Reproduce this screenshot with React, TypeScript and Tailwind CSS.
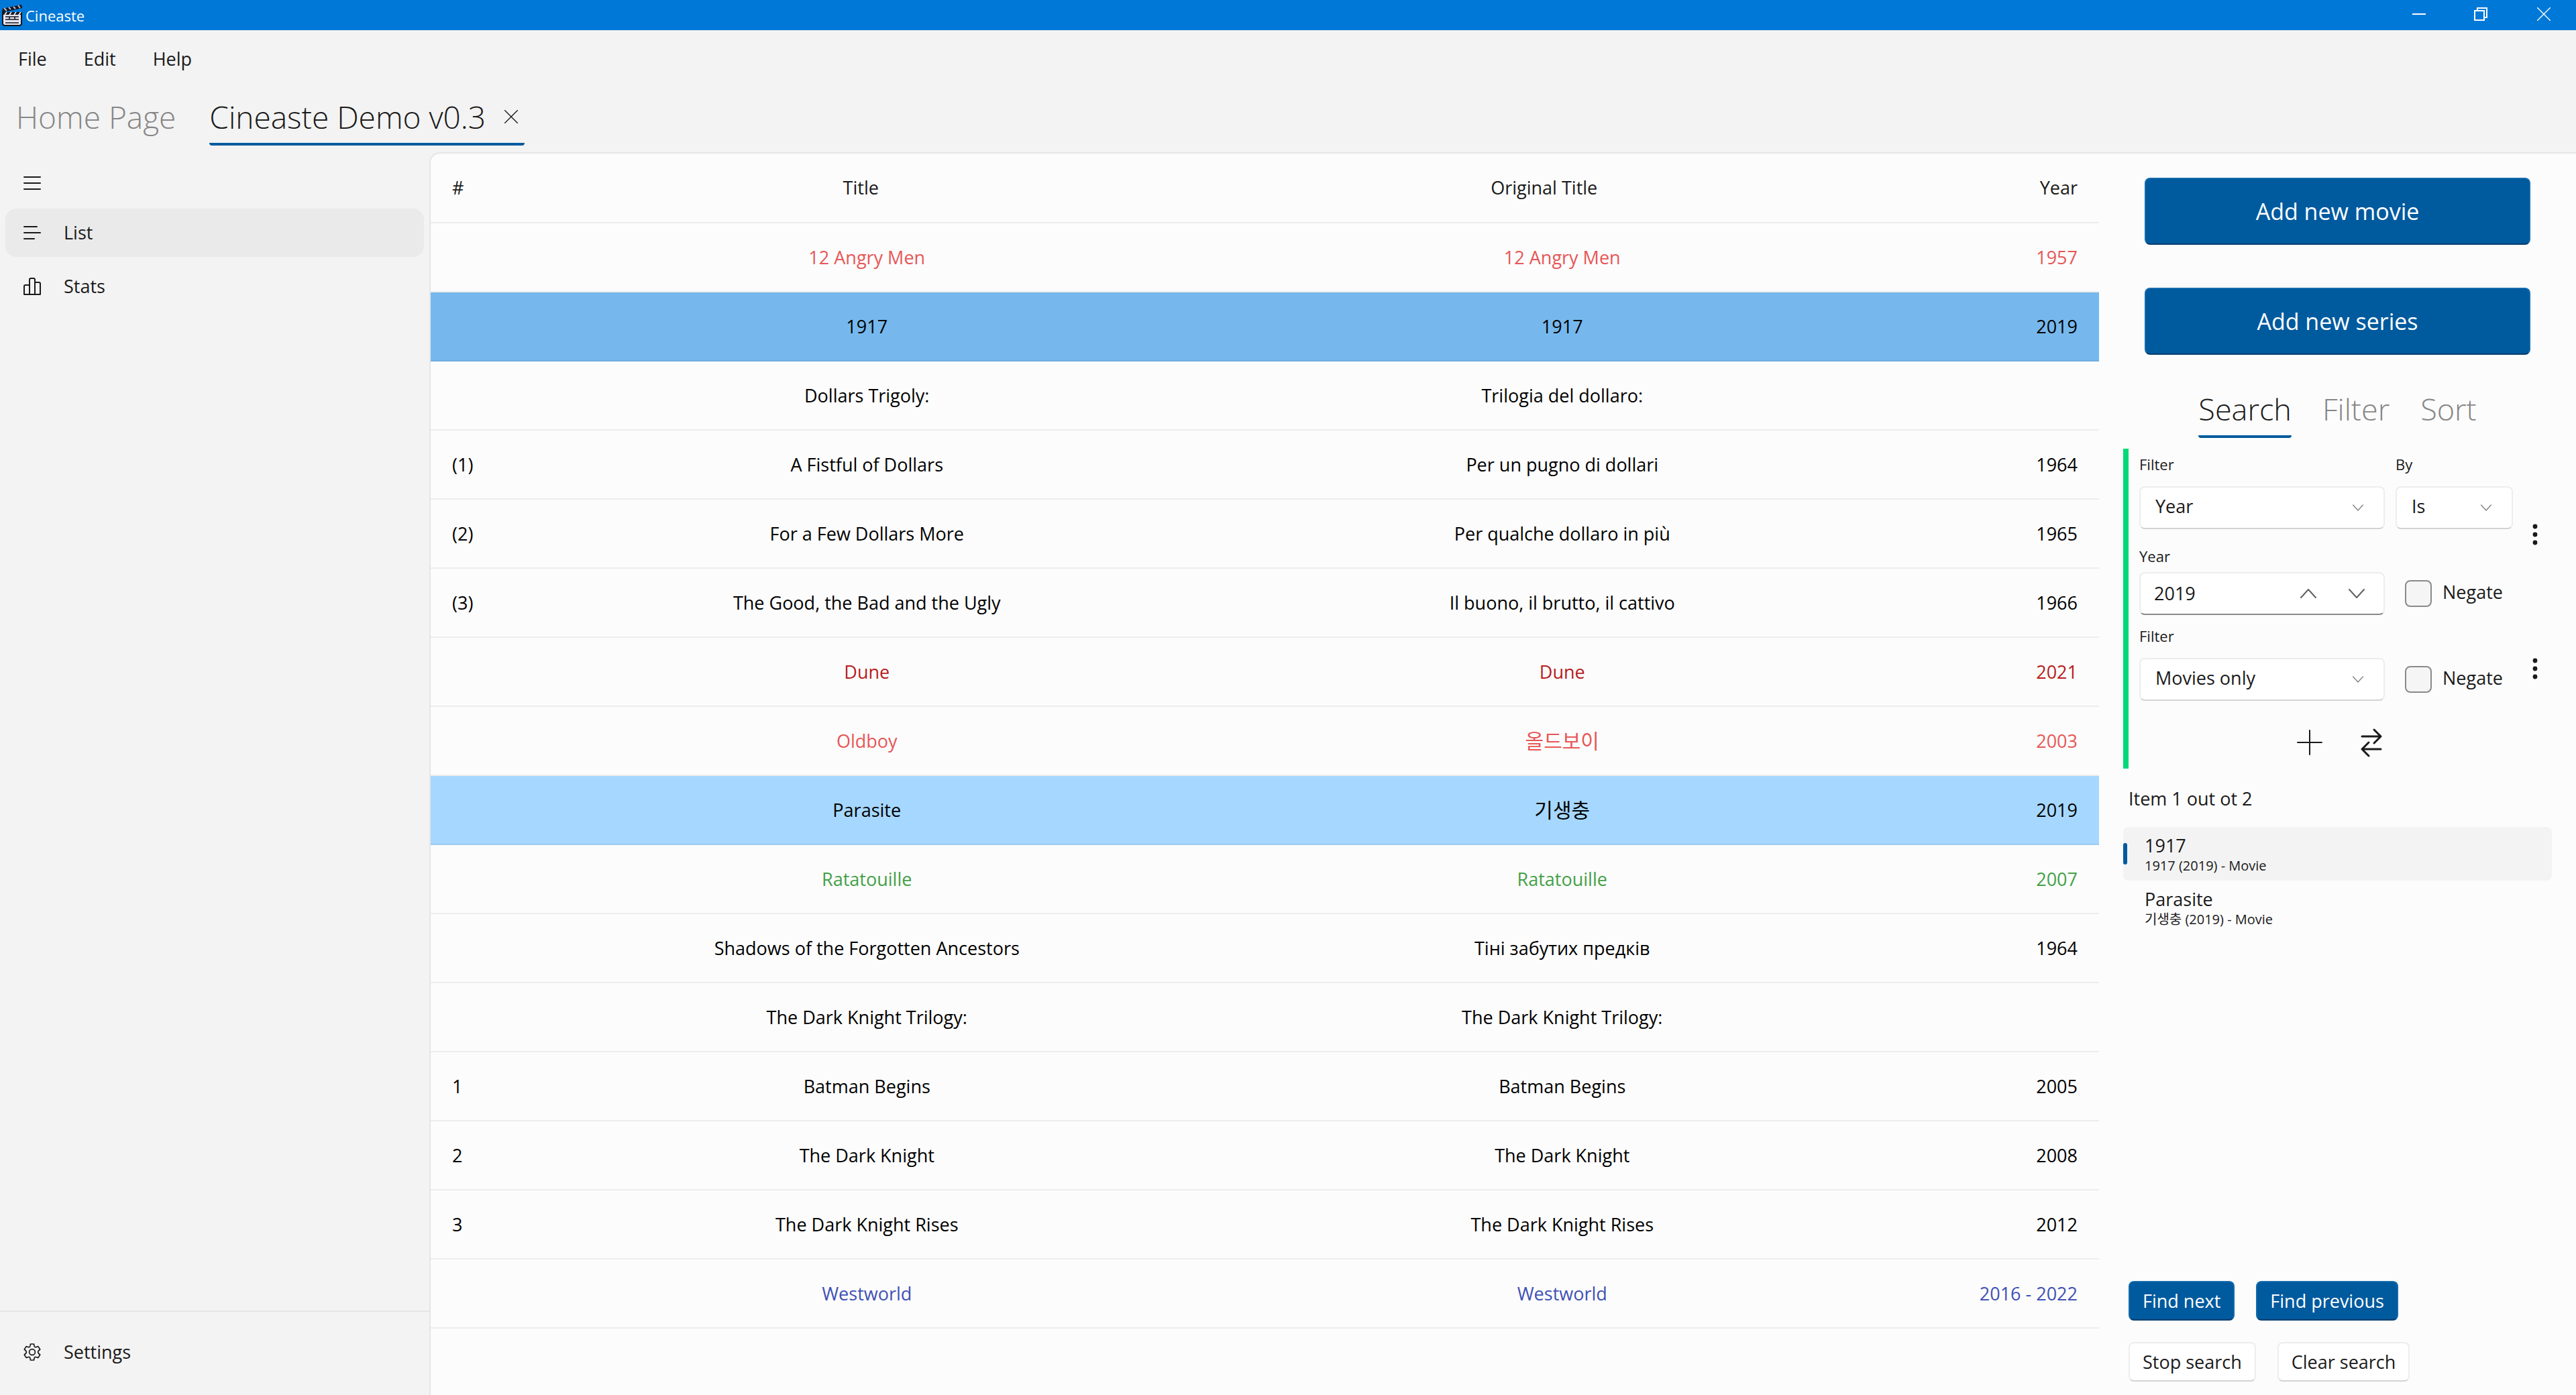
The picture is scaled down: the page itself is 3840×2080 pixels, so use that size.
import React from "react";

type Row = { n?: string; title: string; original?: string; year?: string; color?: string; bg?: string; korean?: boolean };

const rows: Row[] = [
  { title: "12 Angry Men", year: "1957", color: "text-[#e75757]" },
  { title: "1917", year: "2019", bg: "bg-[#76b8ed] border-[#6fade0]" },
  { title: "Dollars Trigoly:", original: "Trilogia del dollaro:" },
  { n: "(1)", title: "A Fistful of Dollars", original: "Per un pugno di dollari", year: "1964" },
  { n: "(2)", title: "For a Few Dollars More", original: "Per qualche dollaro in più", year: "1965" },
  { n: "(3)", title: "The Good, the Bad and the Ugly", original: "Il buono, il brutto, il cattivo", year: "1966" },
  { title: "Dune", year: "2021", color: "text-[#b71c1c]" },
  { title: "Oldboy", original: "올드보이", year: "2003", color: "text-[#e75757]", korean: true },
  { title: "Parasite", original: "기생충", year: "2019", bg: "bg-[#a6d8ff] border-[#9ccbf1]", korean: true },
  { title: "Ratatouille", year: "2007", color: "text-[#43a047]" },
  { title: "Shadows of the Forgotten Ancestors", original: "Тіні забутих предків", year: "1964" },
  { title: "The Dark Knight Trilogy:" },
  { n: "1", title: "Batman Begins", year: "2005" },
  { n: "2", title: "The Dark Knight", year: "2008" },
  { n: "3", title: "The Dark Knight Rises", year: "2012" },
  { title: "Westworld", year: "2016 - 2022", color: "text-[#3f51b5]" },
];

const stroke = { fill: "none", stroke: "currentColor", strokeWidth: 2, strokeLinecap: "round" as const, strokeLinejoin: "round" as const };

function Clapper() {
  return (
    <svg width="32" height="32" viewBox="0 0 32 32" aria-hidden="true">
      <path d="M2 12h28v17l-2 2H4l-2-2z" fill="#e6e7f2" stroke="#16161d" strokeWidth="2" />
      <path d="M1 8l4 3h26v4H1z" fill="#16161d" />
      <path d="M5 15l3-4M12 15l3-4M19 15l3-4M26 15l3-4" stroke="#e6e7f2" strokeWidth="2" />
      <path d="M1 6L30 0l1 5L4 11z" fill="#16161d" />
      <path d="M4 5l4 4M11 4l3 3M18 3l3 3M25 1l3 4" stroke="#b9bbdf" strokeWidth="2" />
      <path d="M6 18h20M6 22h20M6 27h20M12 18v4M20 18v4" stroke="#16161d" strokeWidth="1.6" />
    </svg>
  );
}

function Cross({ size }: { size: number }) {
  return (
    <svg width={size} height={size} viewBox="0 0 20 20" {...stroke} strokeWidth={1.4} aria-hidden="true">
      <path d="M.5.5l19 19M19.5.5l-19 19" />
    </svg>
  );
}

function Chevron({ up, className }: { up?: boolean; className: string }) {
  return (
    <svg className={className} viewBox="0 0 24 14" {...stroke} aria-hidden="true">
      <path d={up ? "M1 13L12 1l11 12" : "M1 1l11 12L23 1"} />
    </svg>
  );
}

function Dots({ className }: { className?: string }) {
  return (
    <button aria-label="More options" className={`mr-[5px] flex h-10 w-10 items-center justify-center ${className ?? ""}`}>
      <svg width="8" height="32" viewBox="0 0 8 32" fill="#1a1a1a" aria-hidden="true">
        <circle cx="4" cy="4" r="3.4" />
        <circle cx="4" cy="16" r="3.4" />
        <circle cx="4" cy="28" r="3.4" />
      </svg>
    </button>
  );
}

function Dropdown({ id, label, value, className }: { id: string; label: string; value: string; className: string }) {
  return (
    <div className={className}>
      <label htmlFor={id} className="block h-[49px] text-[22px] leading-8">{label}</label>
      <div className="relative">
        <select
          id={id}
          defaultValue={value}
          className="h-16 w-full appearance-none rounded-lg border-2 border-[#ededed] border-b-[#d3d3d3] bg-white pb-1 pl-[22px]"
        >
          <option>{value}</option>
        </select>
        <Chevron className="pointer-events-none absolute top-[27px] right-8 h-[10px] w-4 text-[#808080]" />
      </div>
    </div>
  );
}

function Negate() {
  return (
    <label className="flex h-16 items-center gap-4">
      <input type="checkbox" className="size-10 appearance-none rounded-lg border-2 border-[#8a8a8a] bg-[#f5f5f5]" />
      <span className="pb-1">Negate</span>
    </label>
  );
}

const accent = "rounded-lg border-2 border-[#146aab] border-b-[#003d70] bg-[#005a9e] text-white";
const plain = "rounded-lg border-2 border-[#ededed] border-b-[#d3d3d3] bg-white";

export default function App() {
  return (
    <div className="flex min-h-screen flex-col bg-[#f3f3f3] font-['Open_Sans','Noto_Sans_CJK_KR',sans-serif] text-[27px] leading-9 text-[#1a1a1a]">
      <header className="flex h-[45px] items-center bg-[#0078d7] text-white">
        <div className="flex flex-1 items-center gap-1 pl-0.5">
          <Clapper />
          <h1 className="text-[22px] leading-7">Cineaste</h1>
        </div>
        <button aria-label="Minimize" className="flex h-full w-[92px] items-center justify-center pb-1">
          <svg width="20" height="20" viewBox="0 0 20 20" aria-hidden="true"><path d="M0 10h20" stroke="white" strokeWidth="2" /></svg>
        </button>
        <button aria-label="Restore" className="flex h-full w-[92px] items-center justify-center pb-1">
          <svg width="20" height="20" viewBox="0 0 20 20" fill="none" stroke="white" strokeWidth="2" aria-hidden="true">
            <path d="M1 5h14v14H1zM5 5V1h14v14h-4" />
          </svg>
        </button>
        <button aria-label="Close" className="flex h-full w-[96px] items-center justify-center pb-1"><Cross size={20} /></button>
      </header>

      <nav className="flex h-[86px] items-center gap-[55px] pl-[27px]" aria-label="Menu">
        <button>File</button>
        <button>Edit</button>
        <button>Help</button>
      </nav>

      <div className="flex h-24 items-start gap-[50px] pt-1 pl-6 text-[46px] leading-[78px] font-light" role="tablist">
        <button role="tab" aria-selected="false" className="text-[#868686]">Home Page</button>
        <div className="flex items-center gap-7 rounded-sm border-b-4 border-[#005a9e] pr-2.5">
          <button role="tab" aria-selected="true">Cineaste Demo v0.3</button>
          <button aria-label="Close tab" className="flex"><Cross size={20} /></button>
        </div>
      </div>

      <div className="flex flex-1">
        <aside className="flex w-[640px] shrink-0 flex-col">
          <button aria-label="Toggle navigation" className="flex h-[84px] items-center pt-2 pl-[35px]">
            <svg width="26" height="26" viewBox="0 0 26 26" {...stroke} aria-hidden="true"><path d="M1 4h24M1 13h24M1 22h24" /></svg>
          </button>
          <nav className="flex flex-1 flex-col gap-2 px-2" aria-label="Views">
            <button className="flex h-[72px] items-center gap-[34px] rounded-2xl bg-[#eaeaea] pl-[27px]">
              <svg width="26" height="26" viewBox="0 0 26 26" {...stroke} aria-hidden="true"><path d="M1 4h19M1 13h24M1 22h15" /></svg>
              List
            </button>
            <button className="flex h-[72px] items-center gap-[34px] pl-[27px]">
              <svg width="26" height="26" viewBox="0 0 26 26" {...stroke} aria-hidden="true">
                <path d="M9 25V3a2 2 0 0 1 2-2h4a2 2 0 0 1 2 2v22M9 11H3a2 2 0 0 0-2 2v12h24V9a2 2 0 0 0-2-2h-6" />
              </svg>
              Stats
            </button>
          </nav>
          <div className="h-[126px] border-t-2 border-[#e5e5e5] px-2 pt-6">
            <button className="flex h-[72px] items-center gap-[34px] pl-[27px]">
              <svg width="26" height="26" viewBox="0 0 26 26" {...stroke} strokeWidth={1.7} aria-hidden="true">
                <circle cx="13" cy="13" r="4.4" />
                <path d="M10.5 1h5l.6 3Q16.800 6.300 19 5.500l2.900-.9L24.700 9l-2.200 2Q20.800 13 22.500 15l2.200 2-2.800 4.400-2.900-.9Q16.800 19.700 16.100 22l-.6 3h-5l-.6-3Q9.200 19.700 7 20.500l-2.900.9L1.300 17l2.200-2Q5.200 13 3.500 11L1.300 9l2.800-4.400 2.900.9Q9.200 6.300 9.900 4z" />
              </svg>
              Settings
            </button>
          </div>
        </aside>

        <main className="flex flex-1 rounded-tl-2xl border-t-2 border-l-2 border-[#e5e5e5] bg-[#fcfcfc]">
          <div className="flex-1 text-black">
            <table className="w-full table-fixed">
              <thead>
                <tr className="h-[103px] border-b-2 border-[#ededed] text-[#1a1a1a]">
                  <th className="w-[132px] pl-8 text-left font-normal">#</th>
                  <th className="pr-[18px] font-normal">Title</th>
                  <th className="pr-[54px] font-normal">Original Title</th>
                  <th className="w-[282px] pr-8 text-right font-normal">Year</th>
                </tr>
              </thead>
              <tbody>
                {rows.map((r) => (
                  <tr key={r.title} className={`h-[103px] border-b-2 ${r.bg ?? "border-[#ededed]"} ${r.color ?? ""}`}>
                    <td className="pl-8">{r.n}</td>
                    <td className="text-center">{r.title}</td>
                    <td className={r.korean ? "text-center text-[30px]" : "text-center"}>{r.original ?? r.title}</td>
                    <td className="pr-8 text-right">{r.year}</td>
                  </tr>
                ))}
              </tbody>
            </table>
          </div>

          <aside className="flex w-[711px] shrink-0 flex-col pt-9 pr-9 pl-9">
            <div className="flex flex-col gap-16 px-8 text-[34px]">
              <button className={`h-[100px] ${accent}`}>Add new movie</button>
              <button className={`h-[100px] ${accent}`}>Add new series</button>
            </div>

            <div className="mt-[42px] flex h-[82px] justify-center gap-[46px] text-[45px] leading-[78px] font-light" role="tablist">
              <button role="tab" aria-selected="true" className="rounded-sm border-b-4 border-[#005a9e]">Search</button>
              <button role="tab" aria-selected="false" className="border-b-4 border-transparent text-[#868686]">Filter</button>
              <button role="tab" aria-selected="false" className="border-b-4 border-transparent text-[#868686]">Sort</button>
            </div>

            <section className="mt-4 flex h-[477px] flex-col border-l-8 border-[#00d978] pt-[7px] pl-4">
              <div className="flex items-center justify-between">
                <div className="w-[557px]">
                  <div className="flex gap-4">
                    <Dropdown id="field" label="Filter" value="Year" className="w-[366px]" />
                    <Dropdown id="operation" label="By" value="Is" className="w-[175px]" />
                  </div>
                  <div className="mt-4 flex items-end gap-[30px]">
                    <div className="w-[366px]">
                      <label htmlFor="year" className="mt-1 block h-11 pt-1 text-[22px] leading-8">Year</label>
                      <div className="flex h-16 items-center rounded-lg border-2 border-[#ededed] border-b-[#8a8a8a] bg-white pl-5">
                        <input id="year" defaultValue="2019" className="min-w-0 flex-1 bg-transparent" />
                        <button aria-label="Increase" className="flex h-full w-[72px] items-center justify-center"><Chevron up className="h-[14px] w-6 text-[#606060]" /></button>
                        <button aria-label="Decrease" className="mr-1 flex h-full w-[72px] items-center justify-center"><Chevron className="h-[14px] w-6 text-[#606060]" /></button>
                      </div>
                    </div>
                    <Negate />
                  </div>
                </div>
                <Dots />
              </div>
              <div className="mt-[15px] flex items-center justify-between">
                <div className="flex w-[557px] items-end gap-[30px]">
                  <Dropdown id="kind" label="Filter" value="Movies only" className="w-[366px]" />
                  <Negate />
                </div>
                <Dots className="mt-4" />
              </div>
              <div className="mt-[34px] flex justify-center gap-11 pr-4">
                <button aria-label="Add filter" className="size-12">
                  <svg width="48" height="56" viewBox="0 0 48 56" {...stroke} aria-hidden="true"><path d="M24 10v36M6 28h36" /></svg>
                </button>
                <button aria-label="Swap operator" className="size-12">
                  <svg width="48" height="56" viewBox="0 0 48 56" {...stroke} strokeWidth={3} aria-hidden="true">
                    <path d="M10 19h28M28 9l10 10-10 10M38 38H10M20 28L10 38l10 10" />
                  </svg>
                </button>
              </div>
            </section>

            <p className="mt-[27px] pl-2">Item 1 out ot 2</p>
            <ul className="mt-6 flex-1">
              <li className="relative h-20 rounded-lg bg-[#f3f3f3] pt-2.5 pl-8">
                <span className="absolute top-6 left-0 h-8 w-1.5 rounded-full bg-[#005a9e]" />
                <p>1917</p>
                <p className="text-[20px] leading-6">1917 (2019) - Movie</p>
              </li>
              <li className="h-20 pt-2.5 pl-8">
                <p>Parasite</p>
                <p className="text-[20px] leading-6">기생충 (2019) - Movie</p>
              </li>
            </ul>

            <div className="mb-5 flex flex-col gap-8 pl-2">
              <div className="flex gap-8">
                <button className={`h-[59px] px-[19px] ${accent}`}>Find next</button>
                <button className={`h-[59px] px-[19px] ${accent}`}>Find previous</button>
              </div>
              <div className="flex gap-8">
                <button className={`h-[59px] px-[19px] ${plain}`}>Stop search</button>
                <button className={`h-[59px] px-[19px] ${plain}`}>Clear search</button>
              </div>
            </div>
          </aside>
        </main>
      </div>
    </div>
  );
}
